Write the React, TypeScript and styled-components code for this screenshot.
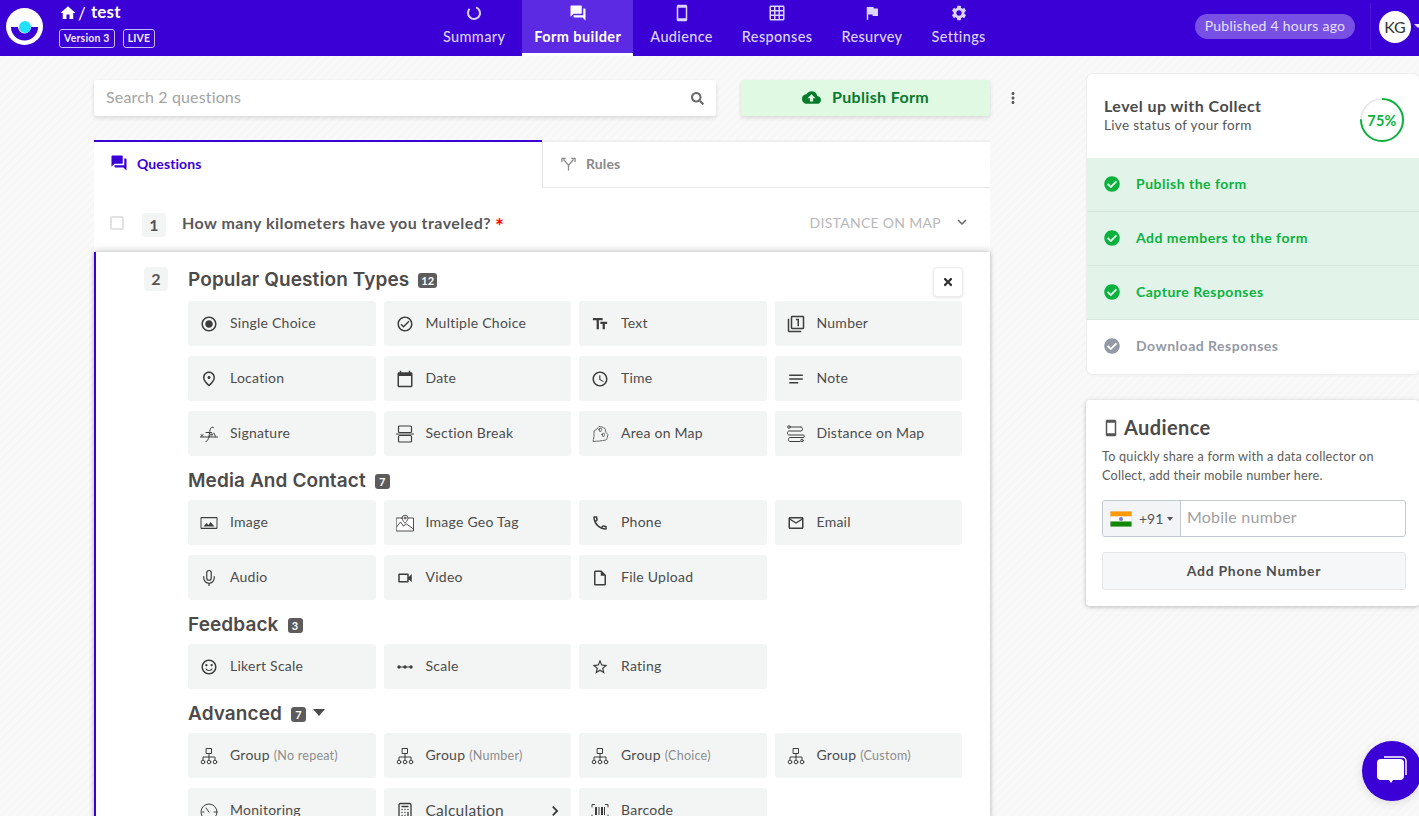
import React from "react";
import styled, { createGlobalStyle } from "styled-components";
import {
  MdHome, MdForum, MdOutlineSmartphone, MdOutlineGridOn, MdFlag, MdSettings, MdCloudUpload, MdMoreVert,
  MdRadioButtonChecked, MdOutlineCheckCircle, MdTextFields, MdOutlineFilter1, MdOutlinePlace, MdCalendarToday,
  MdAccessTime, MdNotes, MdOutlinePhone, MdMailOutline, MdOutlineVideocam,
  MdOutlineInsertDriveFile, MdOutlineSentimentSatisfied, MdStarBorder, MdExpandMore, MdChevronRight,
} from "react-icons/md";
import { FaCheckCircle, FaSearch, FaTimes } from "react-icons/fa";
import { Mic, Calculator } from "lucide-react";

const Global = createGlobalStyle`
  html, body { margin: 0; padding: 0; height: 816px; overflow: hidden; }
  body { font-family: Lato, "Open Sans", sans-serif; color: #4a4a4a; }
  * { box-sizing: border-box; }
`;

const Page = styled.div`
  position: relative; height: 816px; overflow: hidden;
  background: repeating-linear-gradient(135deg, #f6f7f6 0 3px, #f8f9f8 3px 6px);
`;
const Header = styled.header`
  height: 56px; background: #3a00d6; display: flex; color: #fff;
`;
const Brand = styled.div`
  width: 431px; flex: none; display: flex; padding: 7px 0 0 6px; gap: 17px;
`;
const Logo = styled.svg`width: 37px; height: 37px; margin-top: 1px; flex: none;`;
const BrandText = styled.div`display: flex; flex-direction: column; gap: 5px; margin-top: -5px;`;
const Crumb = styled.div`display: flex; align-items: center; font-size: 17px; font-weight: 700; letter-spacing: .2px; height: 22px;
  svg { width: 18px; height: 18px; margin-left: -1px; }
`;
const Slash = styled.span`font-weight: 400; margin: 0 5px 0 1px; font-size: 17px;`;
const CrumbName = styled.span`padding-bottom: 4px;`;
const Badges = styled.div`display: flex; gap: 8px; margin-left: -1px;`;
const Badge = styled.span`
  height: 19px; border: 1px solid #c9bcf5; border-radius: 3px; font-size: 10.5px; font-weight: 700; line-height: 17px;
  padding: 0 4px; letter-spacing: .2px; color: #f1edff;
`;
const Nav = styled.nav`display: flex; gap: 5px; height: 56px;`;
const NavItem = styled.div<{ $active?: boolean }>`
  padding: 4px 12px 0; display: flex; flex-direction: column; align-items: center; height: 56px;
  font-size: 14.5px; letter-spacing: ${p => (p.$active ? ".42px" : ".34px")}; font-weight: ${p => (p.$active ? 700 : 500)};
  color: ${p => (p.$active ? "#fff" : "#dcd4fa")};
  background: ${p => (p.$active ? "#5b2ae2" : "transparent")};
  border-bottom: 3px solid ${p => (p.$active ? "#fff" : "transparent")};
  span { margin-top: 5px; line-height: 20px; white-space: nowrap; }
  svg { width: 18px; height: 18px; display: block; }
`;
const HeaderRight = styled.div`margin-left: auto; display: flex; align-items: flex-start; position: relative; width: 224px; padding: 14px 0 0 0;`;
const Pill = styled.div`
  width: 160px; height: 25px; border-radius: 13px; background: #7850e4; color: #e6e0fb; font-size: 14px; line-height: 23px; text-align: center; letter-spacing: .25px;
`;
const Divider = styled.div`width: 1px; height: 46px; background: #4a17da; margin: -11px 0 0 15px;`;
const Avatar = styled.div`
  width: 32px; height: 32px; border-radius: 50%; background: #fff; color: #333; font-size: 16px; line-height: 32px; text-align: center; margin: -3px 0 0 8px; flex: none;
`;
const Caret = styled.div`
  position: absolute; right: -3px; top: 24px; width: 0; height: 0;
  border-left: 4px solid transparent; border-right: 4px solid transparent; border-top: 4px solid #e6e0fb;
`;

const Main = styled.main`display: flex; align-items: flex-start; height: 760px; overflow: hidden;`;
const Left = styled.div`width: 896px; margin: 24px 0 0 94px; flex: none;`;
const TopBar = styled.div`display: flex; align-items: center; height: 36px;`;
const Search = styled.div`
  width: 622px; height: 36px; background: #fff; border-radius: 3px; box-shadow: 0 2px 4px rgba(0,0,0,.13);
  display: flex; align-items: center; justify-content: space-between; padding: 0 12px 3px; font-size: 16px; color: #a3a3a3; letter-spacing: .15px;
  svg { width: 13px; height: 13px; color: #6b6b6b; margin-top: 3px; }
`;
const Publish = styled.div`
  width: 249px; height: 36px; margin-left: 25px; background: #dff9e3; border-radius: 3px; box-shadow: 0 2px 4px rgba(0,0,0,.13);
  display: flex; align-items: center; justify-content: center; gap: 11px; font-size: 16px; font-weight: 700; color: #087a2b; letter-spacing: .35px; padding-bottom: 3px;
  svg { width: 19px; height: 19px; margin-top: 1px; }
`;
const Dots = styled.div`
  width: 0; color: #555; svg { width: 18px; height: 18px; margin-left: 14px; display: block; }
`;
const Tabs = styled.div`display: flex; margin-top: 24px; height: 48px;`;
const Tab = styled.div<{ $active?: boolean }>`
  flex: ${p => (p.$active ? "0 0 448px" : "1")}; display: flex; align-items: center; padding-bottom: ${p => (p.$active ? "4px" : "2px")};
  background: #fff; font-size: 14px; font-weight: 700; letter-spacing: .1px;
  gap: ${p => (p.$active ? "9px" : "10px")};
  padding-left: ${p => (p.$active ? "16px" : "18px")};
  color: ${p => (p.$active ? "#3a00d6" : "#8a8a8a")};
  border-top: 2px solid ${p => (p.$active ? "#3a00d6" : "#f0f0f0")};
  border-left: ${p => (p.$active ? "0" : "1px solid #e6e6e6")};
  border-bottom: ${p => (p.$active ? "0" : "1px solid #e6e6e6")};
  svg { width: ${p => (p.$active ? "18px" : "15px")}; height: ${p => (p.$active ? "18px" : "15px")}; }
`;
const QuestionRow = styled.div`
  height: 64px; background: #fff; display: flex; align-items: center; padding: 9px 20px 0 16px;
`;
const Check = styled.div`width: 14px; height: 14px; border: 2px solid #e2e2e2; border-radius: 2px; margin-right: 18px; margin-top: -3px;`;
const NumBox = styled.div`
  width: 24px; height: 24px; flex: none; background: #f3f4f4; border-radius: 4px; color: #555; font-size: 16px; font-weight: 700; text-align: center; line-height: 24px;
`;
const QuestionText = styled.div`margin-left: 16px; font-size: 16px; font-weight: 700; color: #595959; letter-spacing: .46px; padding-bottom: 3px;`;
const Star = styled.span`color: #f00; margin-left: 4px; font-size: 21px; line-height: 16px; vertical-align: -5px;`;
const QType = styled.div`margin-left: auto; font-size: 14px; color: #b8b8b8; letter-spacing: .3px; display: flex; align-items: center; gap: 12px; padding-bottom: 5px;
  svg { width: 18px; height: 18px; color: #666; margin-right: -1px; }
`;
const Card = styled.section`
  background: #fff; border-left: 2px solid #3a00d6; box-shadow: 0 -3px 6px rgba(0,0,0,.12), 0 1px 4px rgba(0,0,0,.2);
  display: flex; gap: 20px; padding: 15px 28px 0 48px; position: relative;
`;
const Content = styled.div`flex: 1; min-width: 0;`;
const TitleRow = styled.div`display: flex; justify-content: space-between; align-items: flex-start; height: 34px;`;
const SectionTitle = styled.h3`
  margin: 0; display: flex; align-items: center; height: 24px; font-family: Inter, Lato, sans-serif; font-size: 19px; font-weight: 600; color: #4d4a4a; letter-spacing: .1px;
`;
const SectionHead = styled.div`height: 44px; padding-top: 12px;`;
const Count = styled.span`
  margin-left: 9px; height: 15px; min-width: 15px; padding: 0 3px; background: #5d5b5b; color: #fff; border-radius: 3px; font-family: Lato, sans-serif; font-size: 11px; font-weight: 700; line-height: 15px; text-align: center; letter-spacing: 0; margin-top: 2px;
`;
const Close = styled.div`
  width: 30px; height: 30px; margin-right: -1px; background: #fff; border: 1px solid #ececec; border-radius: 4px; display: flex; align-items: center; justify-content: center; color: #333;
  box-shadow: 0 1px 3px rgba(0,0,0,.1);
  svg { width: 12px; height: 12px; }
`;
const Grid = styled.div`
  display: grid; grid-template-columns: repeat(4, 1fr); gap: 10px 8px;
`;
const Item = styled.div`
  height: 45px; background: #f3f5f5; border-radius: 3px; display: flex; align-items: center; padding-left: 12px; gap: 12px; font-size: 14px; color: #4c4c4c; letter-spacing: .25px; position: relative; white-space: nowrap;
`;
const ItemLabel = styled.span`padding-bottom: 2px;`;
const IconSlot = styled.span`
  width: 18px; height: 18px; display: flex; align-items: center; justify-content: center; color: #3d3d3d; flex: none;
  svg { width: 18px; height: 18px; display: block; flex: none; }
`;
const Note = styled.span`color: #8c8c8c; font-size: 12.5px; margin-left: 4px;`;
const Big = styled.span`font-size: 15.5px;`;
const ArrowMark = styled.span`
  position: absolute; right: 6px; top: 13px; color: #333; svg { width: 20px; height: 20px; display: block; }
`;
const CaretMark = styled.span`
  width: 0; height: 0; margin: 0 0 1px 7px;
  border-left: 6px solid transparent; border-right: 6px solid transparent; border-top: 7px solid #4d4a4a;
`;

const Side = styled.aside`width: 332px; margin: 18px 0 0 97px; flex: none;`;
const ProgressCard = styled.div`
  background: #fff; border-radius: 6px; box-shadow: 0 0 0 1px #eee, 0 1px 3px rgba(0,0,0,.06); overflow: hidden;
`;
const ProgressHead = styled.div`
  height: 84px; display: flex; align-items: center; justify-content: space-between; padding: 0 14px 0 17px;
`;
const ProgText = styled.div`padding-bottom: 3px;`;
const ProgTitle = styled.div`font-size: 16px; font-weight: 700; color: #4a4a4a; letter-spacing: .45px; line-height: 20px;`;
const ProgSub = styled.div`font-size: 13.5px; color: #565656; letter-spacing: .33px; line-height: 18px;`;
const Ring = styled.div`
  position: relative; width: 46px; height: 46px; margin-top: 8px;
  svg { width: 46px; height: 46px; display: block; }
  span { position: absolute; inset: 0; display: flex; align-items: center; justify-content: center; color: #0ab23d; font-weight: 700; font-size: 14.5px; letter-spacing: .2px; }
`;
const Step = styled.div<{ $done?: boolean }>`
  height: 54px; display: flex; align-items: center; padding: 0 0 2px 17px; gap: 16px; font-size: 14px; font-weight: 700; letter-spacing: .5px;
  background: ${p => (p.$done ? "#e2f4e9" : "#fff")};
  color: ${p => (p.$done ? "#0ab23d" : "#9399a5")};
  border-bottom: 1px solid ${p => (p.$done ? "#d4e7db" : "#fff")};
  svg { width: 16px; height: 16px; flex: none; }
`;
const AudienceCard = styled.div`
  margin: 26px 0 0 -1px; height: 206px; background: #fff; border-radius: 4px; box-shadow: 0 1px 4px rgba(0,0,0,.25); padding: 13px 13px 0 16px;
`;
const AudTitle = styled.div`display: flex; align-items: center; font-size: 20px; font-weight: 700; color: #4a4a4a; height: 28px; letter-spacing: .4px;
  svg { width: 18px; height: 18px; margin: 2px 4px 0 0; color: #555; }
`;
const AudDesc = styled.p`margin: 6px 0 15px; font-size: 12.7px; line-height: 19px; color: #5c5c5c; letter-spacing: .22px;`;
const PhoneInput = styled.div`
  height: 37px; display: flex; border: 1px solid #c3c9d1; border-radius: 3px; background: #fff; overflow: hidden;
`;
const Dial = styled.div`
  width: 78px; flex: none; background: #f3f4f5; border-right: 1px solid #c3c9d1; display: flex; align-items: center; padding-left: 7px; font-size: 14px; color: #555; gap: 7px;
`;
const Flag = styled.svg`width: 22px; height: 16px; flex: none;`;
const DialCaret = styled.span`
  width: 0; height: 0; border-left: 3px solid transparent; border-right: 3px solid transparent; border-top: 4px solid #555; margin-left: -3px;
`;
const Placeholder = styled.div`padding-left: 6px; font-size: 16px; color: #a0a0a0; line-height: 31px; letter-spacing: .22px;`;
const AddBtn = styled.div`
  margin-top: 15px; height: 38px; background: #f6f7f8; border: 1px solid #e4e6e8; border-radius: 3px; text-align: center; line-height: 36px; font-size: 14px; font-weight: 700; color: #4f4f4f; letter-spacing: .7px;
`;
const Chat = styled.div`
  position: absolute; left: 1362px; top: 741px; width: 60px; height: 60px; border-radius: 50%; background: #3a00d6; display: flex; align-items: center; justify-content: center;
  box-shadow: 0 2px 10px rgba(0,0,0,.12);
  svg { width: 34px; height: 34px; }
`;

const S = { fill: "none", stroke: "currentColor", strokeWidth: 1, strokeLinecap: "round" as const, strokeLinejoin: "round" as const };
const GroupIcon = () => (
  <svg viewBox="0 0 18 18" {...S}><rect x="6.500" y="1.500" width="5" height="5" /><path d="M9 6.500V10M3 13v-3h12v3M9 10v3" /><circle cx="3" cy="15" r="1.800" /><circle cx="9" cy="15" r="1.800" /><circle cx="15" cy="15" r="1.800" /></svg>
);
const SignatureIcon = () => (
  <svg viewBox="0 0 18 18" {...S}><path d="M0.500 12h17M1 9.500l2 2M3 9.500l-2 2" /><path d="M6 16.500c2 0 3-4.500 3.500-8.500S11 1 13.500 2.500M6 7.500h5.500M9.500 12c1-4 2.300-4 2.300-2s1-2 2-2 .5 3.500 2 3.500" /></svg>
);
const SectionIcon = () => (
  <svg viewBox="0 0 18 18" {...S} strokeWidth={1.200}><rect x="2.500" y="1" width="13" height="6.500" rx="1" /><rect x="2.500" y="10.500" width="13" height="6.500" rx="1" /><path d="M0.500 9h17" strokeDasharray="2 1" /></svg>
);
const AreaIcon = () => (
  <svg viewBox="0 0 18 18" {...S} strokeWidth={0.800}><path d="M3 6l3-2 2-2.500 3 .5 3 1.500 1 4 2 2-1 4-1 1.500-6 1-7 .5 1-5z" strokeDasharray="2 1" /><path d="M8 4.500a1.300 1.300 0 1 1 2.600 0c0 1-1.300 2.500-1.300 2.500S8 5.500 8 4.500zM11 9.500a1.300 1.300 0 1 1 2.600 0c0 1-1.300 2.500-1.300 2.500S11 10.500 11 9.500z" /></svg>
);
const DistanceIcon = () => (
  <svg viewBox="0 0 18 18" {...S} strokeWidth={1}><circle cx="2" cy="2" r="1.300" /><path d="M3.500 2h10.500M14 2c2 0 2 4 0 4H2c-2 0-2 4 0 4h14c2 0 2 2 0 2.500M16 12.500H3c-2 0-2 4 0 4h10" /><circle cx="15" cy="15.500" r="1.300" /></svg>
);
const GeoIcon = () => (
  <svg viewBox="0 0 18 18" {...S} strokeWidth={0.900}><rect x="0.500" y="4" width="17" height="13" fill="#fff" /><path d="M0.500 13l4-5 3 4 3-2 7 5" /><path d="M6 4.200a3 3 0 1 1 6 0c0 2-3 5-3 5s-3-3-3-5z" fill="#fff" /><circle cx="9" cy="4" r="1" /></svg>
);
const ImageIcon = () => (
  <svg viewBox="0 0 18 18" fill="currentColor"><path d="M1.500 3h15a1 1 0 0 1 1 1v10a1 1 0 0 1-1 1h-15a1 1 0 0 1-1-1V4a1 1 0 0 1 1-1zm0 1.300v9.400h15V4.300z" fillRule="evenodd" /><path d="M3.500 12.500l3-3.500 2 2 2-3 4 4.500z" /></svg>
);
const ScaleIcon = () => (
  <svg viewBox="0 0 18 18" fill="currentColor"><circle cx="3" cy="9" r="1.700" /><circle cx="9" cy="9" r="1.700" /><circle cx="15" cy="9" r="1.700" /><path d="M3 8.500h12v1H3z" /></svg>
);
const GaugeIcon = () => (
  <svg viewBox="0 0 18 18" {...S}><circle cx="9" cy="10" r="8" /><path d="M9 10L6 6M2.500 10H4M14 10h1.500" /></svg>
);
const BarcodeIcon = () => (
  <svg viewBox="0 0 18 18" {...S}><path d="M1 5V2.500h2.500M14.500 2.500H17V5M1 13v2.500h2.500M14.500 15.500H17V13" /><path d="M4 5h2v8H4zM7.500 5h1v8h-1zM10 5h2v8h-2zM13 5h1v8h-1z" fill="currentColor" stroke="none" /></svg>
);
const RulesIcon = () => (
  <svg viewBox="0 0 16 16" {...S} strokeWidth={1.400}><path d="M8 15v-5L3 4M8 10l5-6M1 6V2.500h3.500M15 6V2.500h-3.500" /></svg>
);
const RingSmall = () => (
  <svg viewBox="0 0 18 18" fill="none"><circle cx="9" cy="9" r="6" stroke="currentColor" strokeWidth="2" strokeDasharray="30 8" transform="rotate(-70 9 9)" /></svg>
);

type Q = { icon: React.ReactNode; label: React.ReactNode; note?: string; arrow?: boolean };
const popular: Q[] = [
  { icon: <MdRadioButtonChecked />, label: "Single Choice" },
  { icon: <MdOutlineCheckCircle />, label: "Multiple Choice" },
  { icon: <MdTextFields />, label: "Text" },
  { icon: <MdOutlineFilter1 />, label: "Number" },
  { icon: <MdOutlinePlace />, label: "Location" },
  { icon: <MdCalendarToday />, label: "Date" },
  { icon: <MdAccessTime />, label: "Time" },
  { icon: <MdNotes />, label: "Note" },
  { icon: <SignatureIcon />, label: "Signature" },
  { icon: <SectionIcon />, label: "Section Break" },
  { icon: <AreaIcon />, label: "Area on Map" },
  { icon: <DistanceIcon />, label: "Distance on Map" },
];
const media: Q[] = [
  { icon: <ImageIcon />, label: "Image" },
  { icon: <GeoIcon />, label: "Image Geo Tag" },
  { icon: <MdOutlinePhone />, label: "Phone" },
  { icon: <MdMailOutline />, label: "Email" },
  { icon: <Mic strokeWidth={1.600} />, label: "Audio" },
  { icon: <MdOutlineVideocam />, label: "Video" },
  { icon: <MdOutlineInsertDriveFile />, label: "File Upload" },
];
const feedback: Q[] = [
  { icon: <MdOutlineSentimentSatisfied />, label: "Likert Scale" },
  { icon: <ScaleIcon />, label: "Scale" },
  { icon: <MdStarBorder />, label: "Rating" },
];
const advanced: Q[] = [
  { icon: <GroupIcon />, label: "Group", note: "(No repeat)" },
  { icon: <GroupIcon />, label: "Group", note: "(Number)" },
  { icon: <GroupIcon />, label: "Group", note: "(Choice)" },
  { icon: <GroupIcon />, label: "Group", note: "(Custom)" },
  { icon: <GaugeIcon />, label: "Monitoring" },
  { icon: <Calculator strokeWidth={1.800} />, label: <Big>Calculation</Big>, arrow: true },
  { icon: <BarcodeIcon />, label: "Barcode" },
];

const Types = ({ items }: { items: Q[] }) => (
  <Grid>
    {items.map((q, i) => (
      <Item key={i}>
        <IconSlot>{q.icon}</IconSlot>
        <ItemLabel>{q.label}{q.note && <Note>{q.note}</Note>}</ItemLabel>
        {q.arrow && <ArrowMark><MdChevronRight /></ArrowMark>}
      </Item>
    ))}
  </Grid>
);

export default function App() {
  return (
    <Page>
      <Global />
      <Header>
        <Brand>
          <Logo viewBox="0 0 37 37">
            <circle cx="18.500" cy="18.500" r="18.500" fill="#fff" />
            <path d="M5 19h27a13.500 13.500 0 0 1-27 0z" fill="#3a00d6" />
            <path d="M12 19h13a6.500 6.500 0 0 1-13 0z" fill="#fff" />
            <circle cx="19" cy="19" r="6" fill="#22e0ff" />
          </Logo>
          <BrandText>
            <Crumb><MdHome /><Slash>/</Slash><CrumbName>test</CrumbName></Crumb>
            <Badges><Badge>Version 3</Badge><Badge>LIVE</Badge></Badges>
          </BrandText>
        </Brand>
        <Nav>
          <NavItem><RingSmall /><span>Summary</span></NavItem>
          <NavItem $active><MdForum /><span>Form builder</span></NavItem>
          <NavItem><MdOutlineSmartphone /><span>Audience</span></NavItem>
          <NavItem><MdOutlineGridOn /><span>Responses</span></NavItem>
          <NavItem><MdFlag /><span>Resurvey</span></NavItem>
          <NavItem><MdSettings /><span>Settings</span></NavItem>
        </Nav>
        <HeaderRight>
          <Pill>Published 4 hours ago</Pill>
          <Divider />
          <Avatar>KG</Avatar>
          <Caret />
        </HeaderRight>
      </Header>
      <Main>
        <Left>
          <TopBar>
            <Search>Search 2 questions<FaSearch /></Search>
            <Publish><MdCloudUpload />Publish Form</Publish>
            <Dots><MdMoreVert /></Dots>
          </TopBar>
          <Tabs>
            <Tab $active><MdForum />Questions</Tab>
            <Tab><RulesIcon />Rules</Tab>
          </Tabs>
          <QuestionRow>
            <Check />
            <NumBox>1</NumBox>
            <QuestionText>How many kilometers have you traveled?<Star>*</Star></QuestionText>
            <QType>DISTANCE ON MAP<MdExpandMore /></QType>
          </QuestionRow>
          <Card>
            <NumBox>2</NumBox>
            <Content>
              <TitleRow>
                <SectionTitle>Popular Question Types<Count>12</Count></SectionTitle>
                <Close><FaTimes /></Close>
              </TitleRow>
              <Types items={popular} />
              <SectionHead><SectionTitle>Media And Contact<Count>7</Count></SectionTitle></SectionHead>
              <Types items={media} />
              <SectionHead><SectionTitle>Feedback<Count>3</Count></SectionTitle></SectionHead>
              <Types items={feedback} />
              <SectionHead><SectionTitle>Advanced<Count>7</Count><CaretMark /></SectionTitle></SectionHead>
              <Types items={advanced} />
            </Content>
          </Card>
        </Left>
        <Side>
          <ProgressCard>
            <ProgressHead>
              <ProgText>
                <ProgTitle>Level up with Collect</ProgTitle>
                <ProgSub>Live status of your form</ProgSub>
              </ProgText>
              <Ring>
                <svg viewBox="0 0 46 46" fill="none">
                  <circle cx="23" cy="23" r="21" stroke="#e6e6ea" strokeWidth="1.500" />
                  <circle cx="23" cy="23" r="21" stroke="#0ab23d" strokeWidth="2" strokeDasharray="99 132" transform="rotate(-90 23 23)" />
                </svg>
                <span>75%</span>
              </Ring>
            </ProgressHead>
            <Step $done><FaCheckCircle />Publish the form</Step>
            <Step $done><FaCheckCircle />Add members to the form</Step>
            <Step $done><FaCheckCircle />Capture Responses</Step>
            <Step><FaCheckCircle />Download Responses</Step>
          </ProgressCard>
          <AudienceCard>
            <AudTitle><MdOutlineSmartphone />Audience</AudTitle>
            <AudDesc>To quickly share a form with a data collector on<br />Collect, add their mobile number here.</AudDesc>
            <PhoneInput>
              <Dial>
                <Flag viewBox="0 0 22 16">
                  <rect width="22" height="16" fill="#ddd" />
                  <rect x="0.500" y="0.500" width="21" height="5" fill="#f90" />
                  <rect x="0.500" y="5.500" width="21" height="5" fill="#fff" />
                  <rect x="0.500" y="10.500" width="21" height="5" fill="#128807" />
                  <circle cx="11" cy="8" r="2" fill="#7a7ac8" />
                </Flag>
                +91<DialCaret />
              </Dial>
              <Placeholder>Mobile number</Placeholder>
            </PhoneInput>
            <AddBtn>Add Phone Number</AddBtn>
          </AudienceCard>
        </Side>
      </Main>
      <Chat>
        <svg viewBox="0 0 34 34">
          <path d="M9 3h18a4 4 0 0 1 4 4v14" fill="none" stroke="#fff" strokeWidth="1.500" />
          <path d="M6 5h19a4 4 0 0 1 4 4v13a4 4 0 0 1-4 4h-7l-2 3-2-3H6a4 4 0 0 1-4-4V9a4 4 0 0 1 4-4z" fill="#fff" />
        </svg>
      </Chat>
    </Page>
  );
}
